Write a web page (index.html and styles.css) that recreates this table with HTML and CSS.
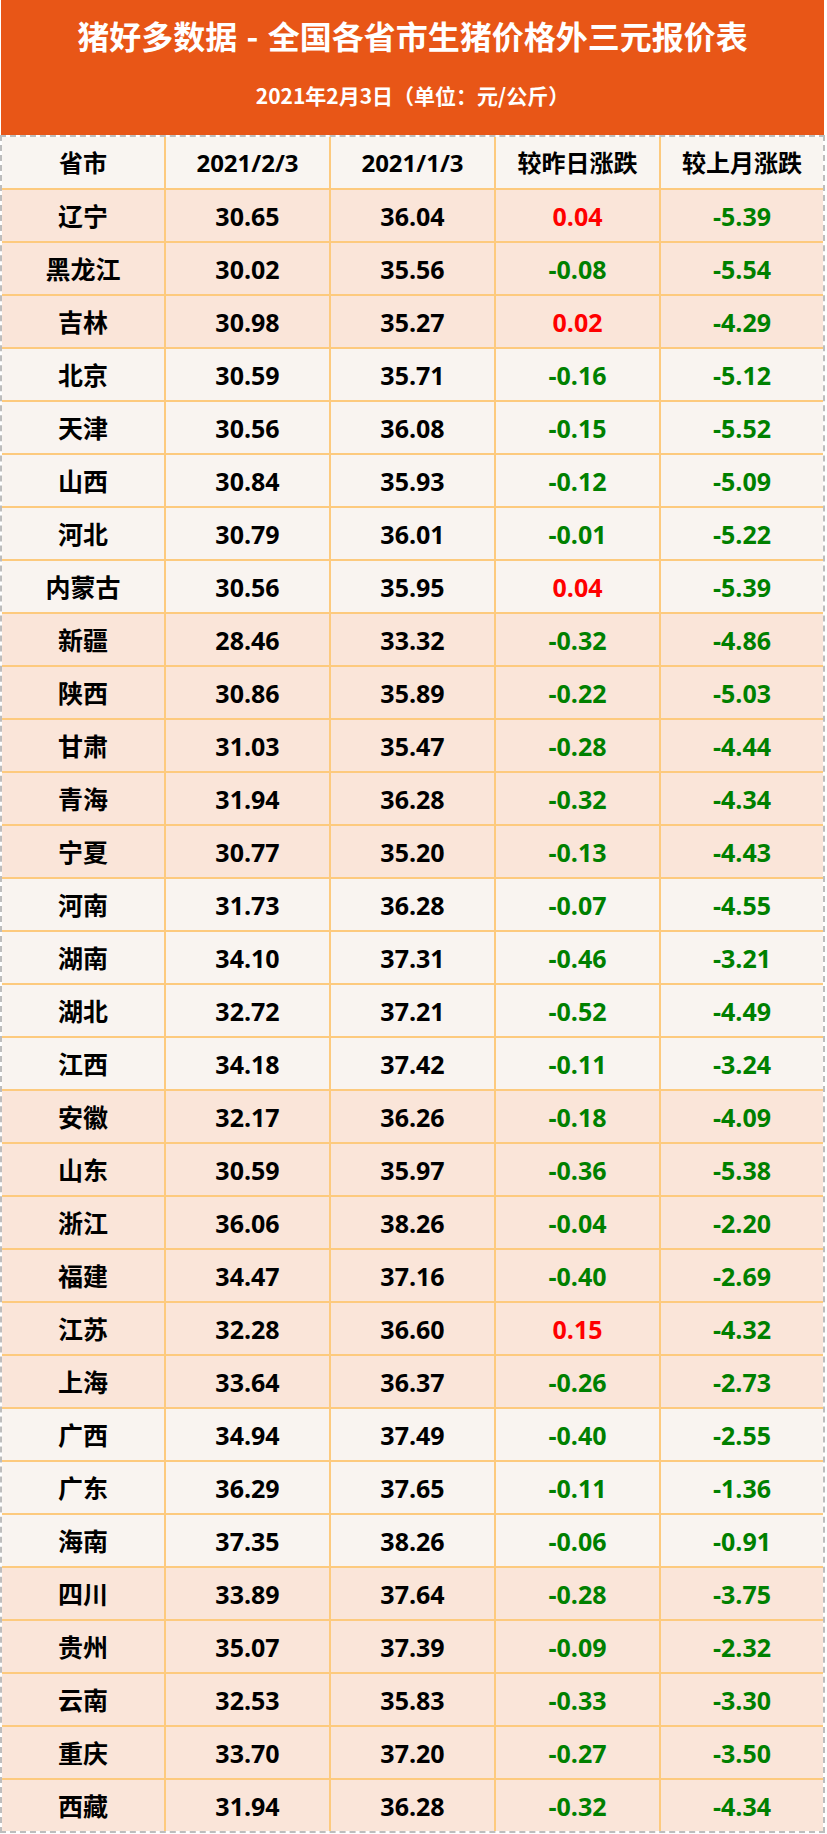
FILE: index.html
```html
<!DOCTYPE html>
<html lang="zh-CN">
<head>
<meta charset="utf-8">
<title>猪好多数据 - 全国各省市生猪价格外三元报价表</title>
<link rel="stylesheet" href="styles.css">
</head>
<body>
<div class="page">
  <header class="title-bar">
    <h1 class="title">猪好多数据 - 全国各省市生猪价格外三元报价表</h1>
    <p class="subtitle">2021年2月3日（单位：元/公斤）</p>
  </header>
  <div class="sheet">
    <table class="prices">
      <colgroup>
        <col class="c1"><col class="c2"><col class="c3"><col class="c4"><col class="c5">
      </colgroup>
      <thead>
        <tr class="head"><th>省市</th><th>2021/2/3</th><th>2021/1/3</th><th>较昨日涨跌</th><th>较上月涨跌</th></tr>
      </thead>
      <tbody>
        <tr class="peach"><td>辽宁</td><td>30.65</td><td>36.04</td><td class="up">0.04</td><td class="down">-5.39</td></tr>
        <tr class="peach"><td>黑龙江</td><td>30.02</td><td>35.56</td><td class="down">-0.08</td><td class="down">-5.54</td></tr>
        <tr class="peach"><td>吉林</td><td>30.98</td><td>35.27</td><td class="up">0.02</td><td class="down">-4.29</td></tr>
        <tr class="light"><td>北京</td><td>30.59</td><td>35.71</td><td class="down">-0.16</td><td class="down">-5.12</td></tr>
        <tr class="light"><td>天津</td><td>30.56</td><td>36.08</td><td class="down">-0.15</td><td class="down">-5.52</td></tr>
        <tr class="light"><td>山西</td><td>30.84</td><td>35.93</td><td class="down">-0.12</td><td class="down">-5.09</td></tr>
        <tr class="light"><td>河北</td><td>30.79</td><td>36.01</td><td class="down">-0.01</td><td class="down">-5.22</td></tr>
        <tr class="light"><td>内蒙古</td><td>30.56</td><td>35.95</td><td class="up">0.04</td><td class="down">-5.39</td></tr>
        <tr class="peach"><td>新疆</td><td>28.46</td><td>33.32</td><td class="down">-0.32</td><td class="down">-4.86</td></tr>
        <tr class="peach"><td>陕西</td><td>30.86</td><td>35.89</td><td class="down">-0.22</td><td class="down">-5.03</td></tr>
        <tr class="peach"><td>甘肃</td><td>31.03</td><td>35.47</td><td class="down">-0.28</td><td class="down">-4.44</td></tr>
        <tr class="peach"><td>青海</td><td>31.94</td><td>36.28</td><td class="down">-0.32</td><td class="down">-4.34</td></tr>
        <tr class="peach"><td>宁夏</td><td>30.77</td><td>35.20</td><td class="down">-0.13</td><td class="down">-4.43</td></tr>
        <tr class="light"><td>河南</td><td>31.73</td><td>36.28</td><td class="down">-0.07</td><td class="down">-4.55</td></tr>
        <tr class="light"><td>湖南</td><td>34.10</td><td>37.31</td><td class="down">-0.46</td><td class="down">-3.21</td></tr>
        <tr class="light"><td>湖北</td><td>32.72</td><td>37.21</td><td class="down">-0.52</td><td class="down">-4.49</td></tr>
        <tr class="light"><td>江西</td><td>34.18</td><td>37.42</td><td class="down">-0.11</td><td class="down">-3.24</td></tr>
        <tr class="peach"><td>安徽</td><td>32.17</td><td>36.26</td><td class="down">-0.18</td><td class="down">-4.09</td></tr>
        <tr class="peach"><td>山东</td><td>30.59</td><td>35.97</td><td class="down">-0.36</td><td class="down">-5.38</td></tr>
        <tr class="peach"><td>浙江</td><td>36.06</td><td>38.26</td><td class="down">-0.04</td><td class="down">-2.20</td></tr>
        <tr class="peach"><td>福建</td><td>34.47</td><td>37.16</td><td class="down">-0.40</td><td class="down">-2.69</td></tr>
        <tr class="peach"><td>江苏</td><td>32.28</td><td>36.60</td><td class="up">0.15</td><td class="down">-4.32</td></tr>
        <tr class="peach"><td>上海</td><td>33.64</td><td>36.37</td><td class="down">-0.26</td><td class="down">-2.73</td></tr>
        <tr class="light"><td>广西</td><td>34.94</td><td>37.49</td><td class="down">-0.40</td><td class="down">-2.55</td></tr>
        <tr class="light"><td>广东</td><td>36.29</td><td>37.65</td><td class="down">-0.11</td><td class="down">-1.36</td></tr>
        <tr class="light"><td>海南</td><td>37.35</td><td>38.26</td><td class="down">-0.06</td><td class="down">-0.91</td></tr>
        <tr class="peach"><td>四川</td><td>33.89</td><td>37.64</td><td class="down">-0.28</td><td class="down">-3.75</td></tr>
        <tr class="peach"><td>贵州</td><td>35.07</td><td>37.39</td><td class="down">-0.09</td><td class="down">-2.32</td></tr>
        <tr class="peach"><td>云南</td><td>32.53</td><td>35.83</td><td class="down">-0.33</td><td class="down">-3.30</td></tr>
        <tr class="peach"><td>重庆</td><td>33.70</td><td>37.20</td><td class="down">-0.27</td><td class="down">-3.50</td></tr>
        <tr class="peach last"><td>西藏</td><td>31.94</td><td>36.28</td><td class="down">-0.32</td><td class="down">-4.34</td></tr>
      </tbody>
    </table>
  </div>
</div>
</body>
</html>
```
FILE: styles.css
```css
html, body {
  margin: 0;
  padding: 0;
  background: #ffffff;
}

.page {
  width: 825px;
  font-family: "Open Sans", "Noto Sans CJK SC", sans-serif;
  font-weight: 700;
  color: #000000;
}

.title-bar {
  width: 823px;
  height: 135px;
  margin-left: 1px;
  background: #e85617;
  color: #ffffff;
  display: flex;
  flex-direction: column;
  align-items: center;
  box-sizing: border-box;
  padding-top: 14px;
}

.title {
  margin: 0;
  font-family: "Noto Sans CJK SC", sans-serif;
  font-size: 32px;
  font-weight: 700;
  line-height: 42px;
  word-spacing: 2px;
}

.subtitle {
  margin: 25px 0 0 0;
  font-family: "Noto Sans CJK SC", sans-serif;
  font-size: 21px;
  font-weight: 700;
  line-height: 28px;
}

.sheet {
  width: 825px;
  box-sizing: border-box;
  border: 2px dashed #bdbdbd;
}

.prices {
  width: 821px;
  border-collapse: separate;
  border-spacing: 0;
  table-layout: fixed;
}

.c1 { width: 164px; }
.c2 { width: 165px; }
.c3 { width: 165px; }
.c4 { width: 165px; }
.c5 { width: 162px; }

.prices th,
.prices td {
  box-sizing: border-box;
  height: 53px;
  padding: 0;
  text-align: center;
  vertical-align: middle;
  font-size: 25px;
  font-weight: 700;
  line-height: 28px;
  border-bottom: 2px solid #fdca7e;
  border-right: 2px solid #fdca7e;
}

.prices th {
  font-size: 24px;
}

.prices th:last-child,
.prices td:last-child {
  border-right: none;
}

.prices tr.last td {
  border-bottom: none;
  height: 51px;
}

.head th { background: #f9f5f1; }
.peach td { background: #fae5d9; }
.light td { background: #f9f4f0; }

.up { color: #ff0000; }
.down { color: #008000; }
```
